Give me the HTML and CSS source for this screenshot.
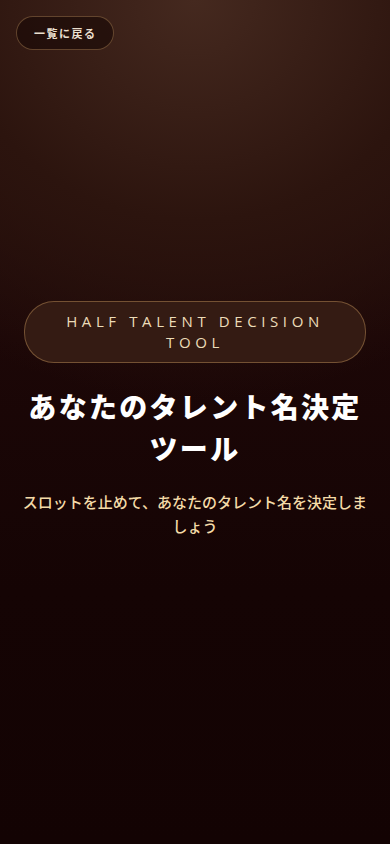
FILE: index.html
```html
<!DOCTYPE html>
<html lang="ja">
<head>
<meta charset="UTF-8" />
<meta name="viewport" content="width=device-width, initial-scale=1" />
<title>あなたのタレント名決定ツール</title>
<link rel="stylesheet" href="styles.css">
</head>
<body>
  <a class="back-btn" href="#">一覧に戻る</a>

  <main class="hero">
    <div class="badge">HALF TALENT DECISION TOOL</div>
    <h1 class="title">あなたのタレント名決定ツール</h1>
    <p class="lead">スロットを止めて、あなたのタレント名を決定しましょう</p>
  </main>
</body>
</html>
```

FILE: styles.css
```css
/* Reset */
* {
  box-sizing: border-box;
}
html, body {
  margin: 0;
  height: 100%;
}
body {
  font-family: 'Noto Sans CJK JP', 'Noto Sans', sans-serif;
  color: #fff;
  background: radial-gradient(ellipse 440px 400px at 50% 0, #45291f 0%, #2c140e 55%, rgba(21, 3, 3, 0) 100%),
              linear-gradient(180deg, #2a120d 0%, #1c0707 40%, #150404 70%, #130303 100%);
  background-color: #140303;
  min-height: 100vh;
  position: relative;
}

/* Back link */
.back-btn {
  position: absolute;
  top: 16px;
  left: 16px;
  height: 34px;
  padding: 0 16px 0 17px;
  display: flex;
  align-items: center;
  border-radius: 9999px;
  border: 1px solid rgba(176, 132, 86, 0.45);
  background: rgba(20, 6, 4, 0.55);
  color: #eadfce;
  font-size: 11px;
  font-weight: 700;
  letter-spacing: 1.5px;
  text-decoration: none;
}

/* Hero */
.hero {
  min-height: 100vh;
  display: flex;
  flex-direction: column;
  align-items: center;
  justify-content: center;
  padding: 0 20px 6px;
  text-align: center;
}
.badge {
  width: 342px;
  padding: 9px 24px;
  border-radius: 30px;
  border: 1px solid rgba(160, 118, 74, 0.6);
  background: #341b13;
  color: #ecdcb8;
  font-family: 'Open Sans', 'Noto Sans', sans-serif;
  font-size: 15px;
  font-weight: 500;
  line-height: 21px;
  letter-spacing: 4.6px;
}
.title {
  margin: 22px 0 0;
  font-size: 28px;
  font-weight: 900;
  line-height: 42px;
  letter-spacing: 2.3px;
  color: #fff;
}
.lead {
  margin: 21px 0 0;
  font-size: 15px;
  font-weight: 500;
  line-height: 24px;
  color: #f4dba8;
}
```
